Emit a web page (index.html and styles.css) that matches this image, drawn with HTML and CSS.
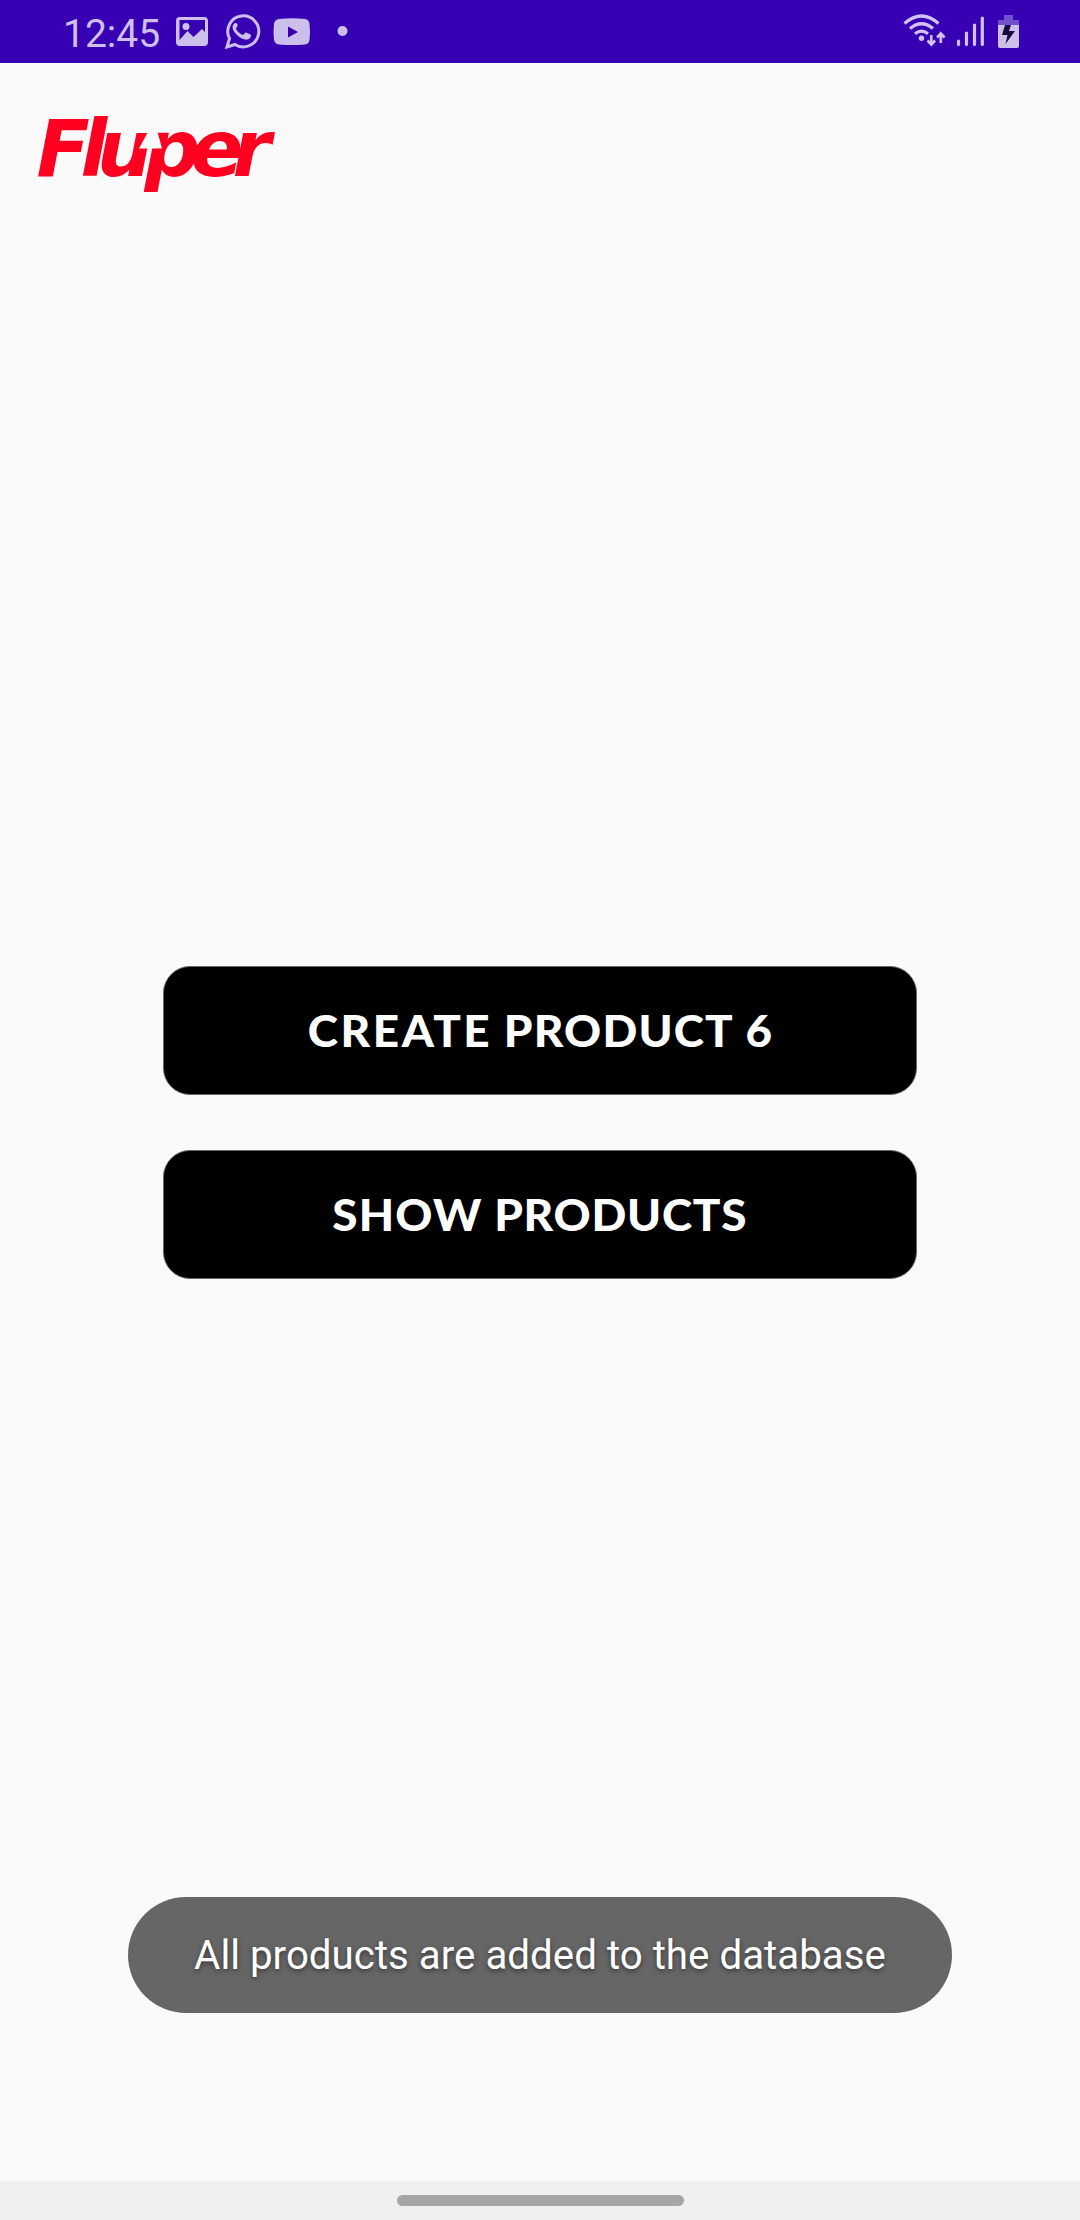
FILE: index.html
```html
<!DOCTYPE html>
<html lang="en">
<head>
<meta charset="utf-8">
<title>Fluper</title>
<link rel="stylesheet" href="styles.css">
</head>
<body>
<div class="screen">
  <header class="status-bar">
    <span class="clock">12:45</span>
    <svg class="notifications" width="185" height="63" viewBox="175 0 185 63" fill="#cdbfec">
      <path fill-rule="evenodd" d="M180 17h24q4 0 4 4v21q0 4-4 4h-24q-4 0-4-4V21q0-4 4-4zM179.500 20v20l8-9 6 6 8.500-8 3 3V20zM186 23a3.500 3.500 0 1 1 0 7 3.500 3.500 0 0 1 0-7z"/>
      <path fill="none" stroke="#cdbfec" stroke-width="3" d="M227 47l2.500-8.500a15.500 15.500 0 1 1 5.500 6z"/>
      <path d="M237 23.500q-2-1.300-3.500.8-2.400 3.500 1.200 8.200 4.700 6 10.500 7.100 4.200.5 5.500-2.600.7-2-.5-2.700l-4.200-1.900q-1.200 0-2.300 2.200-.8.700-2 0-4-2-5.700-5.700-.2-1 1.500-2.700.5-.7-.5-2.700z"/>
      <path fill-rule="evenodd" d="M279 19q13-1.500 26 0 4 .5 4.500 4.500 1 8.500 0 16.500-.5 4-4.500 4.500-13 1-26 0-4-.5-5-4.500-1-8.500 0-16.500.8-4 5-4.500zM288 26.500v11l10-5.500z"/>
      <circle cx="342.500" cy="31" r="5"/>
    </svg>
    <svg class="system-icons" width="130" height="63" viewBox="900 0 130 63" fill="#d2c2f3">
      <g fill="none" stroke="#d2c2f3" stroke-width="3.200">
        <path d="M903.500 23.500Q920.500 8.500 937.500 23.500M909 28.500q11.500-9.500 23 0M914 33.700q6.500-5.200 13 0"/>
        <path stroke-width="2.600" d="M930.300 35v9M926.500 40.500l3.800 4 3.800-4M939.800 43v-9M936 37.500l3.800-4 3.800 4"/>
        <path stroke-linecap="round" d="M957.500 41v3.500M965.500 33v11.500M973.500 25v19.500M981.300 18v26.500"/>
      </g>
      <circle cx="920.500" cy="38.300" r="2.700"/>
      <path fill="#7350cb" d="M1003 15h9v5h6v5h-21v-5h6z"/>
      <path fill="#cdbfec" d="M997 25h21v21q0 2-2 2h-17q-2 0-2-2z"/>
      <path fill="#180b3e" d="M1004 25h6l-2 6h6l-9.500 13 2-9h-5.500z"/>
    </svg>
  </header>

  <main class="content">
    <svg class="logo" width="260" height="100" viewBox="24 97 260 100" role="img" aria-label="Fluper">
      <text class="logo-text" y="176" x="36.5 80.500 97 144.500 190.500 232.500">Fluper</text>
      <path class="logo-notch" d="M149 130h8l5 18.500h-23z"/>
    </svg>
    <div class="actions">
      <button class="action"><span class="label"><span class="wider">CREATE</span> <span class="wide">PRODUCT</span> 6</span></button>
      <button class="action"><span class="label"><span class="wide">SHOW</span> PRODUCTS</span></button>
    </div>
    <div class="toast">All products are added to the database</div>
  </main>

  <footer class="nav-bar"><span class="nav-handle"></span></footer>
</div>
</body>
</html>
```
FILE: styles.css
```css
* { box-sizing: border-box; }
body { margin: 0; background: #fafafa; }
.screen {
  width: 1080px;
  height: 2220px;
  display: flex;
  flex-direction: column;
  background: #fafafa;
  font-family: Roboto, sans-serif;
}
.status-bar {
  height: 63px;
  padding: 0 49px 0 63px;
  display: flex;
  align-items: center;
  background: #3700b3;
}
.clock {
  width: 112px;
  padding-top: 4px;
  color: #cfbfee;
  font-size: 39px;
  line-height: 46px;
  white-space: nowrap;
}
.system-icons { margin-left: auto; }
.content {
  flex: 1;
  display: flex;
  flex-direction: column;
  align-items: center;
}
.logo {
  align-self: flex-start;
  margin: 34px 0 0 24px;
  overflow: visible;
}
.logo-text {
  fill: #ff0020;
  font: italic 700 78px "DejaVu Sans", sans-serif;
}
.logo-notch { fill: #fafafa; }
.actions {
  margin-top: 769px;
  display: flex;
  flex-direction: column;
  gap: 55px;
}
.action {
  width: 754px;
  height: 129px;
  padding: 0;
  border: 1px solid #666;
  border-radius: 27px;
  background: #000;
  color: #fff;
  font: 900 43px Lato, sans-serif;
  letter-spacing: .7px;
}
.label {
  display: inline-block;
  transform: scaleX(1.065);
}
.wide { letter-spacing: 1.1px; }
.wider { letter-spacing: 2.4px; }
.toast {
  width: 824px;
  height: 116px;
  margin-top: 618px;
  border-radius: 58px;
  background: #666;
  color: #fff;
  font-size: 40.3px;
  line-height: 118px;
  text-align: center;
  white-space: nowrap;
  text-shadow: 0 2px 5px rgba(0, 0, 0, .5);
}
.nav-bar {
  height: 39px;
  padding-top: 14px;
  display: flex;
  justify-content: center;
  background: #f0f0f0;
}
.nav-handle {
  width: 287px;
  height: 11px;
  border-radius: 6px;
  background: #a6a6a6;
}
```
